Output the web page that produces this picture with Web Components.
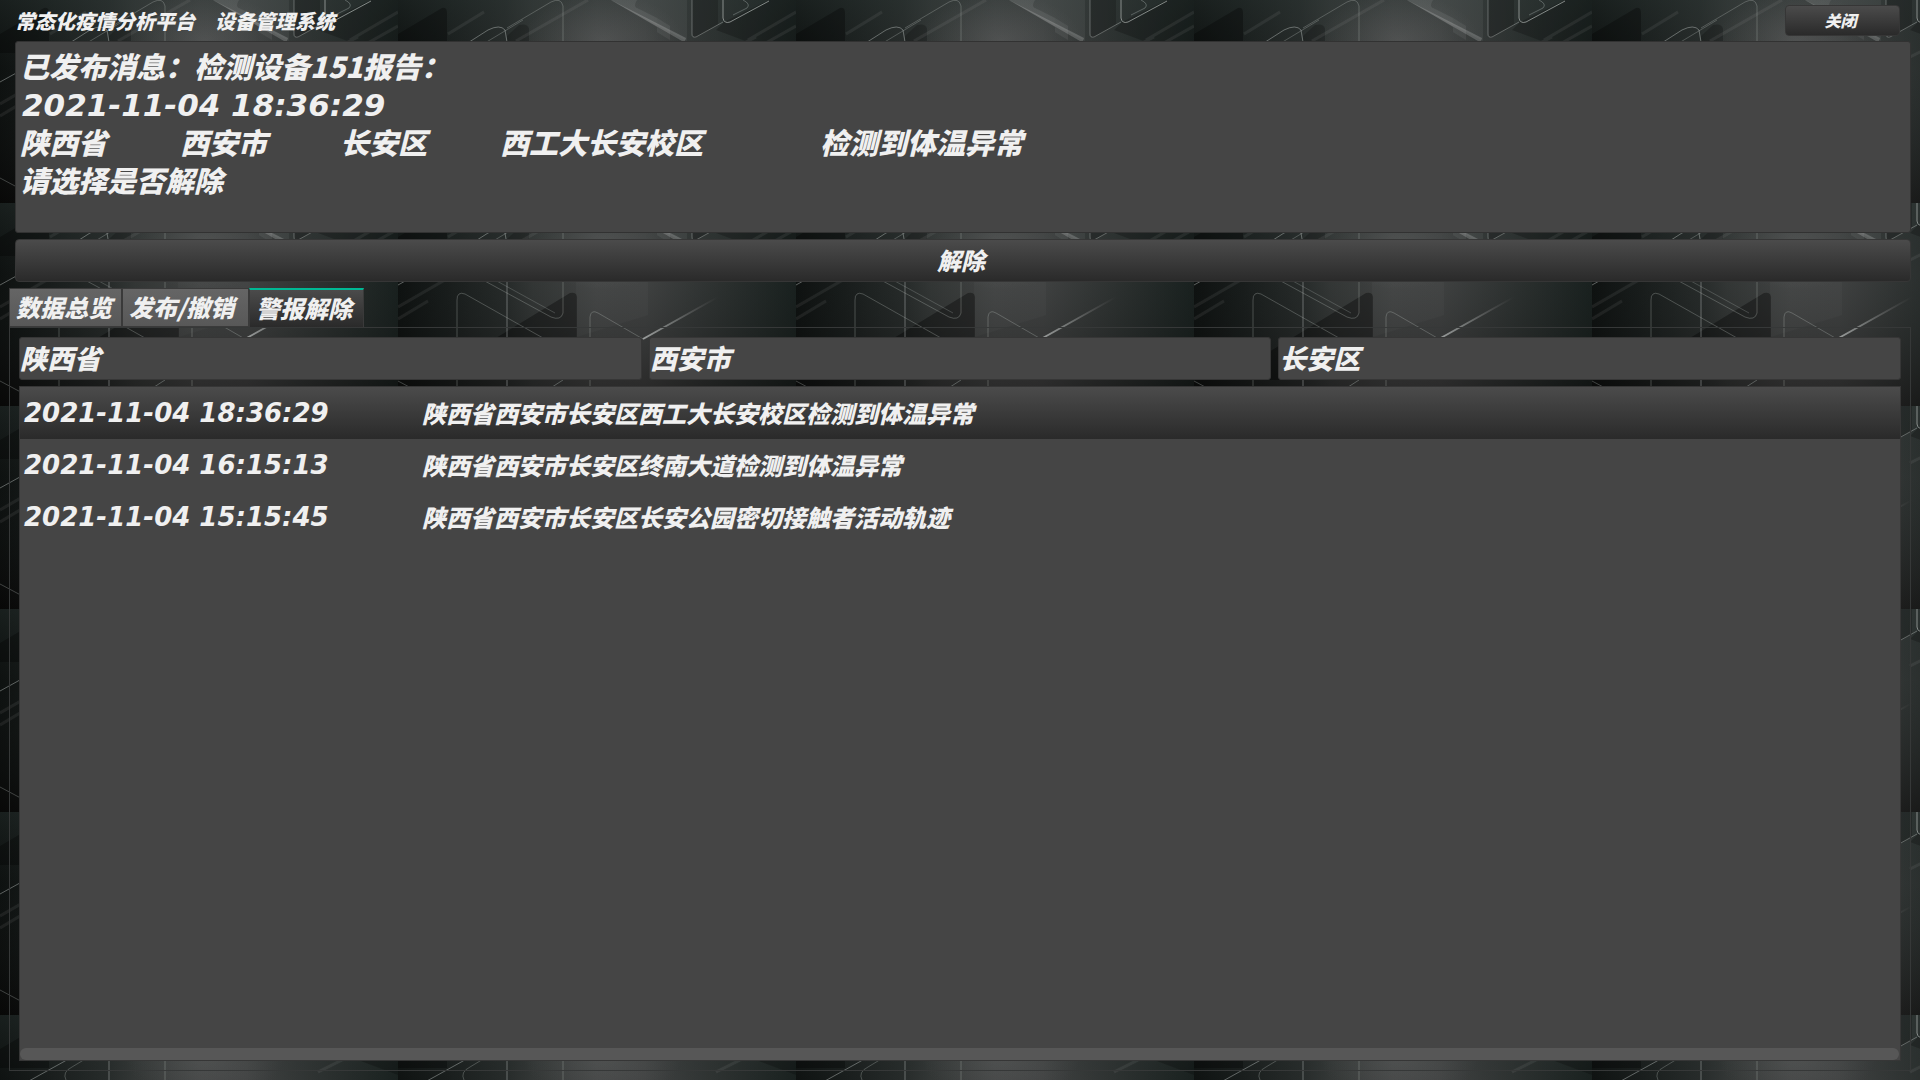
<!DOCTYPE html>
<html lang="zh-CN">
<head>
<meta charset="utf-8">
<title>常态化疫情分析平台</title>
<style>
  html, body { margin: 0; height: 100%; }
  body {
    background: #101312;
    color: #f0f0f0;
    font: italic 900 24px/1.2 "Noto Sans CJK SC", sans-serif;
    --face: linear-gradient(#4b4b4b, #2a2a2a);
    --panel: #454545;
    --edge: #323232;
    --digits: "DejaVu Sans", "Noto Sans CJK SC", sans-serif;
  }
</style>
</head>
<body>
<device-console>
  <app-header slot="header">
    <span slot="title">常态化疫情分析平台　设备管理系统</span>
    <push-button slot="action" compact>关闭</push-button>
  </app-header>
  <message-panel slot="top"></message-panel>
  <push-button slot="top">解除</push-button>
  <tab-view slot="main">
    <tab-item slot="tab">数据总览</tab-item>
    <tab-item slot="tab">发布/撤销</tab-item>
    <tab-item slot="tab" selected>警报解除</tab-item>
    <region-filter></region-filter>
    <alert-list>
      <alert-row selected time="2021-11-04 18:36:29">陕西省西安市长安区西工大长安校区检测到体温异常</alert-row>
      <alert-row time="2021-11-04 16:15:13">陕西省西安市长安区终南大道检测到体温异常</alert-row>
      <alert-row time="2021-11-04 15:15:45">陕西省西安市长安区长安公园密切接触者活动轨迹</alert-row>
    </alert-list>
  </tab-view>
</device-console>

<script>
const define = (name, html, setup) => customElements.define(name, class extends HTMLElement {
  constructor() {
    super();
    this.attachShadow({ mode: "open" }).innerHTML = html;
  }
  connectedCallback() { if (setup) setup(this, this.shadowRoot); }
});

define("tiled-backdrop", `
  <style>
    :host { display: block; overflow: hidden; }
    svg { display: block; width: 100%; height: 100%; }
  </style>
  <svg aria-hidden="true">
    <defs>
      <linearGradient id="base">
        <stop offset="0" stop-color="#0b0e0d"/><stop offset=".12" stop-color="#171b1a"/>
        <stop offset=".27" stop-color="#282c2b"/><stop offset=".34" stop-color="#373a39"/>
        <stop offset=".5" stop-color="#484949"/><stop offset=".62" stop-color="#464747"/>
        <stop offset=".8" stop-color="#303433"/><stop offset="1" stop-color="#18201e"/>
      </linearGradient>
      <linearGradient id="shade" x1="0" y1="0" x2="0" y2="1">
        <stop offset="0" stop-color="#2a3432" stop-opacity=".45"/>
        <stop offset=".35" stop-color="#202625" stop-opacity=".15"/>
        <stop offset="1" stop-color="#050202" stop-opacity=".5"/>
      </linearGradient>
      <radialGradient id="glow"><stop offset="0" stop-color="#777" stop-opacity=".3"/><stop offset="1" stop-color="#777" stop-opacity="0"/></radialGradient>
      <linearGradient id="ray" gradientUnits="userSpaceOnUse" x1="245" y1="136" x2="320" y2="94">
        <stop offset="0" stop-color="#9a9d9c"/><stop offset=".4" stop-color="#6c6f6e"/><stop offset="1" stop-color="#555" stop-opacity="0"/>
      </linearGradient>
      <pattern id="tile" width="398" height="203" patternUnits="userSpaceOnUse">
        <rect width="398" height="203" fill="url(#base)"/>
        <rect width="398" height="203" fill="url(#shade)"/>
        <ellipse cx="205" cy="40" rx="80" ry="46" fill="url(#glow)"/>
        <g fill="#000">
          <path opacity=".3" d="M0 34L44 8q5-1 5 5v40H0z"/>
          <path opacity=".22" d="M109 41V36l12-11q9-2 10 4v14z"/>
          <path opacity=".35" d="M60 158L172 90q8-2 7 7v80H60z"/>
          <path opacity=".2" d="M294 0h26v25l-23 13q-3-1-3-4z"/>
          <path opacity=".22" d="M326 22L371 0h27v60l-80-30z"/>
        </g>
        <g fill="#fff">
          <path opacity=".05" d="M213 0l76 41V0z"/>
          <path opacity=".07" d="M239 0q-5 7 2 9l18 9v9L213 0z"/>
          <path opacity=".18" d="M213 0l75 38-1 3h-3z"/>
          <path opacity=".06" d="M259 18l13 8v14l-13-8z"/>
          <path opacity=".02" d="M178 78h72v34l-72 22z"/>
        </g>
        <g fill="none" stroke="#b8bfbc">
          <path opacity=".3" d="M109 28L153 2q10-5 12 4v104q-2 8-12 4L85 77"/>
          <path opacity=".24" d="M97 77l60 33"/>
          <path opacity=".45" d="M0 82L65 46 90 30q12-6 17 0l2 12v161"/>
          <path opacity=".3" d="M0 178l30 16M59 203V97q0-9 8-6l78 44 24 15M192 203v-89q1-8 8-4l45 26M66 65q-4-8 6-13L125 20"/>
          <path opacity=".4" d="M294 0v34q0 4 4 3l27-15"/>
          <path opacity=".65" d="M325 0v18q1 6 7 4L371 1"/>
          <path opacity=".35" d="M345 0q8 4 4 8l-14 7M165 177l-14 9"/>
          <path opacity=".09" stroke-width="3" d="M0 104l52-30M0 116l30-18M118 41L190 0M50 34l36-22M350 40l48-28M318 57l40-20M398 26l-32 18"/>
        </g>
        <path d="M245 136l75-42" stroke="url(#ray)" stroke-width="2" fill="none"/>
      </pattern>
    </defs>
    <rect width="100%" height="100%" fill="url(#tile)"/>
  </svg>`);

define("device-console", `
  <style>
    :host { display: grid; min-height: 100vh; }
    tiled-backdrop, .page { grid-area: 1 / 1; }
    tiled-backdrop { min-height: 0; contain: size; }
    .page { display: flex; flex-direction: column; gap: 6px; position: relative; box-sizing: border-box; padding: 0 9px 9px; }
    .top { display: flex; flex-direction: column; gap: 6px; padding-left: 6px; }
    .head { display: block; margin-bottom: -6px; }
    .main { flex: 1; display: flex; }
    ::slotted(tab-view) { flex: 1; }
  </style>
  <tiled-backdrop></tiled-backdrop>
  <div class="page">
    <div class="top">
      <div class="head"><slot name="header"></slot></div>
      <slot name="top"></slot>
    </div>
    <div class="main"><slot name="main"></slot></div>
  </div>`);

define("app-header", `
  <style>
    :host { display: flex; justify-content: space-between; align-items: center; height: 41px; padding-right: 11px; }
    h1 { margin: 0; font: inherit; font-size: 20px; line-height: 24px; }
  </style>
  <h1><slot name="title"></slot></h1>
  <slot name="action"></slot>`);

define("push-button", `
  <style>
    :host { display: block; }
    button {
      display: block; width: 100%; height: 43px; padding: 0 4px 2px 0; box-sizing: border-box;
      border: 1px solid #363636; border-radius: 4px; background: var(--face);
      color: inherit; font: inherit; line-height: 24px;
    }
    :host([compact]) button { width: 115px; height: 31px; font-size: 16px; }
  </style>
  <button type="button"><slot></slot></button>`);

define("message-panel", `
  <style>
    :host {
      display: block; box-sizing: border-box; min-height: 192px; padding: 4px;
      background: var(--panel); border: 1px solid var(--edge); border-radius: 3px;
    }
    pre { margin: 0; font: inherit; font-size: 29px; line-height: 38px; tab-size: 160px; }
    time { display: inline-block; font-family: var(--digits); font-size: 31px; line-height: 32px; padding-left: 2px; }
  </style>
  <pre>已发布消息：检测设备151报告：
<time>2021-11-04 18:36:29</time>
陕西省&#9;西安市&#9;长安区&#9;西工大长安校区&#9;检测到体温异常
请选择是否解除</pre>`);

define("tab-view", `
  <style>
    :host { display: flex; flex-direction: column; }
    .bar { display: grid; grid-template-columns: 113px 127px 115px; height: 39px; }
    .pane { flex: 1; display: flex; flex-direction: column; gap: 6px; padding: 9px; border: 1px solid #363838; }
  </style>
  <div class="bar" role="tablist"><slot name="tab"></slot></div>
  <div class="pane"><slot></slot></div>`);

define("tab-item", `
  <style>
    :host { display: block; }
    button {
      display: block; width: 100%; height: 39px; padding: 0 0 2px 6px; box-sizing: border-box;
      border: 1px solid #3a3a3a; background: linear-gradient(#656565, #585858);
      color: inherit; font: inherit; line-height: 24px; text-align: left; white-space: nowrap;
    }
    :host([selected]) button { border-top: 2px solid #00b894; border-bottom: 0; background: var(--face); }
  </style>
  <button type="button" role="tab"><slot></slot></button>`,
  (el, root) => root.querySelector("button").setAttribute("aria-selected", el.hasAttribute("selected")));

define("region-filter", `
  <style>
    :host { display: flex; gap: 7px; }
    input {
      flex: 1; min-width: 0; height: 43px; box-sizing: border-box; padding: 0 0 2px; margin: 0;
      border: 1px solid #363636; border-radius: 3px; background: var(--panel);
      color: inherit; font: inherit; font-size: 27px;
    }
  </style>
  <input type="text" aria-label="省" value="陕西省">
  <input type="text" aria-label="市" value="西安市">
  <input type="text" aria-label="区" value="长安区">`);

define("alert-list", `
  <style>
    :host { flex: 1; display: flex; flex-direction: column; background: var(--panel); border: 1px solid #363636; }
    .rows { flex: 1; }
    .scroll { height: 12px; margin-right: 1px; border-radius: 6px; background: #575757; }
  </style>
  <div class="rows" role="listbox" aria-label="警报"><slot></slot></div>
  <div class="scroll"></div>`);

define("alert-row", `
  <style>
    :host { display: grid; grid-template-columns: 398px 1fr; align-items: center; height: 52px; padding-left: 4px; box-sizing: border-box; line-height: 32px; }
    :host([selected]) { background: var(--face); }
    time { font-family: var(--digits); font-size: 26px; }
  </style>
  <time></time>
  <span><slot></slot></span>`,
  (el, root) => {
    el.setAttribute("role", "option");
    root.querySelector("time").textContent = el.getAttribute("time");
  });
</script>
</body>
</html>
